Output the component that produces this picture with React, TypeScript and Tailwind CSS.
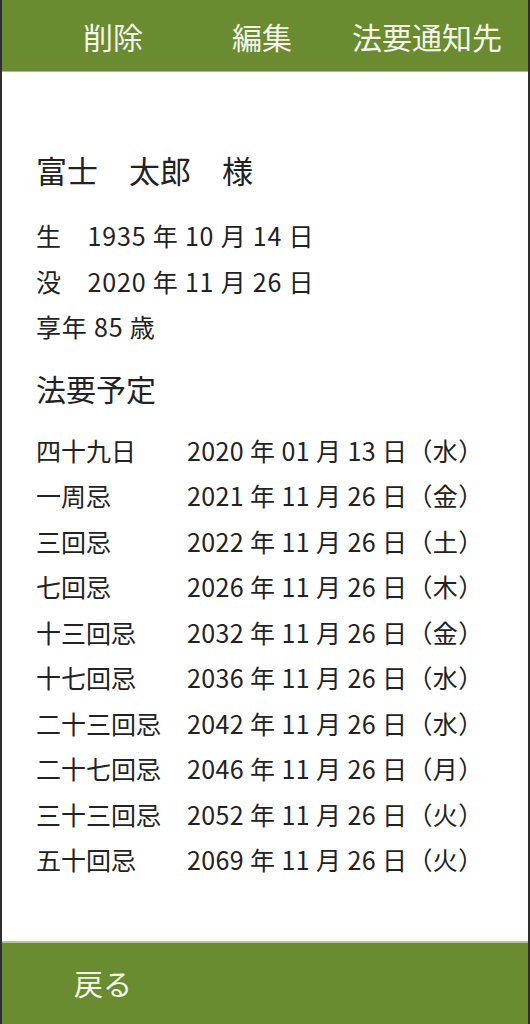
import React from 'react';

const rows: [string, string][] = [
  ['四十九日', '2020 年 01 月 13 日（水）'],
  ['一周忌', '2021 年 11 月 26 日（金）'],
  ['三回忌', '2022 年 11 月 26 日（土）'],
  ['七回忌', '2026 年 11 月 26 日（木）'],
  ['十三回忌', '2032 年 11 月 26 日（金）'],
  ['十七回忌', '2036 年 11 月 26 日（水）'],
  ['二十三回忌', '2042 年 11 月 26 日（水）'],
  ['二十七回忌', '2046 年 11 月 26 日（月）'],
  ['三十三回忌', '2052 年 11 月 26 日（火）'],
  ['五十回忌', '2069 年 11 月 26 日（火）'],
];

export default function App() {
  return (
    <div
      className="w-[530px] h-[1024px] flex flex-col bg-white border-l-2 border-r-2 border-[#2e2e2e] text-[#222]"
      style={{ fontFamily: '"Noto Sans CJK JP", "Noto Sans", sans-serif' }}
    >
      <header className="h-[72px] shrink-0 bg-[#6a8b30] border-b border-[#a9c07d] flex items-center text-[30px] leading-none text-[#f3f7ea]">
        <button className="ml-[81px]">削除</button>
        <button className="ml-[89px]">編集</button>
        <button className="ml-[60px]">法要通知先</button>
      </header>

      <main className="flex-1 pl-[34px] pt-[78px]">
        <h1 className="text-[31px] leading-[40px] whitespace-pre">富士　太郎　様</h1>
        <div className="mt-[23px] text-[25px] leading-[45.5px] tracking-[0.8px]">
          <p className="whitespace-pre">生　1935 年 10 月 14 日</p>
          <p className="whitespace-pre">没　2020 年 11 月 26 日</p>
          <p>享年 85 歳</p>
        </div>
        <h2 className="mt-[18px] text-[30px] leading-[40px]">法要予定</h2>
        <div className="mt-[20px] text-[25px] leading-[45.5px]">
          {rows.map(([label, date]) => (
            <div key={label} className="flex">
              <span className="w-[151px] shrink-0">{label}</span>
              <span className="tracking-[0.4px]">{date}</span>
            </div>
          ))}
        </div>
      </main>

      <footer className="h-[83px] shrink-0 bg-[#6a8b30] border-t-2 border-[#b5c98e] flex items-center">
        <button className="ml-[72px] text-[29px] leading-none text-[#f3f7ea]">戻る</button>
      </footer>
    </div>
  );
}
